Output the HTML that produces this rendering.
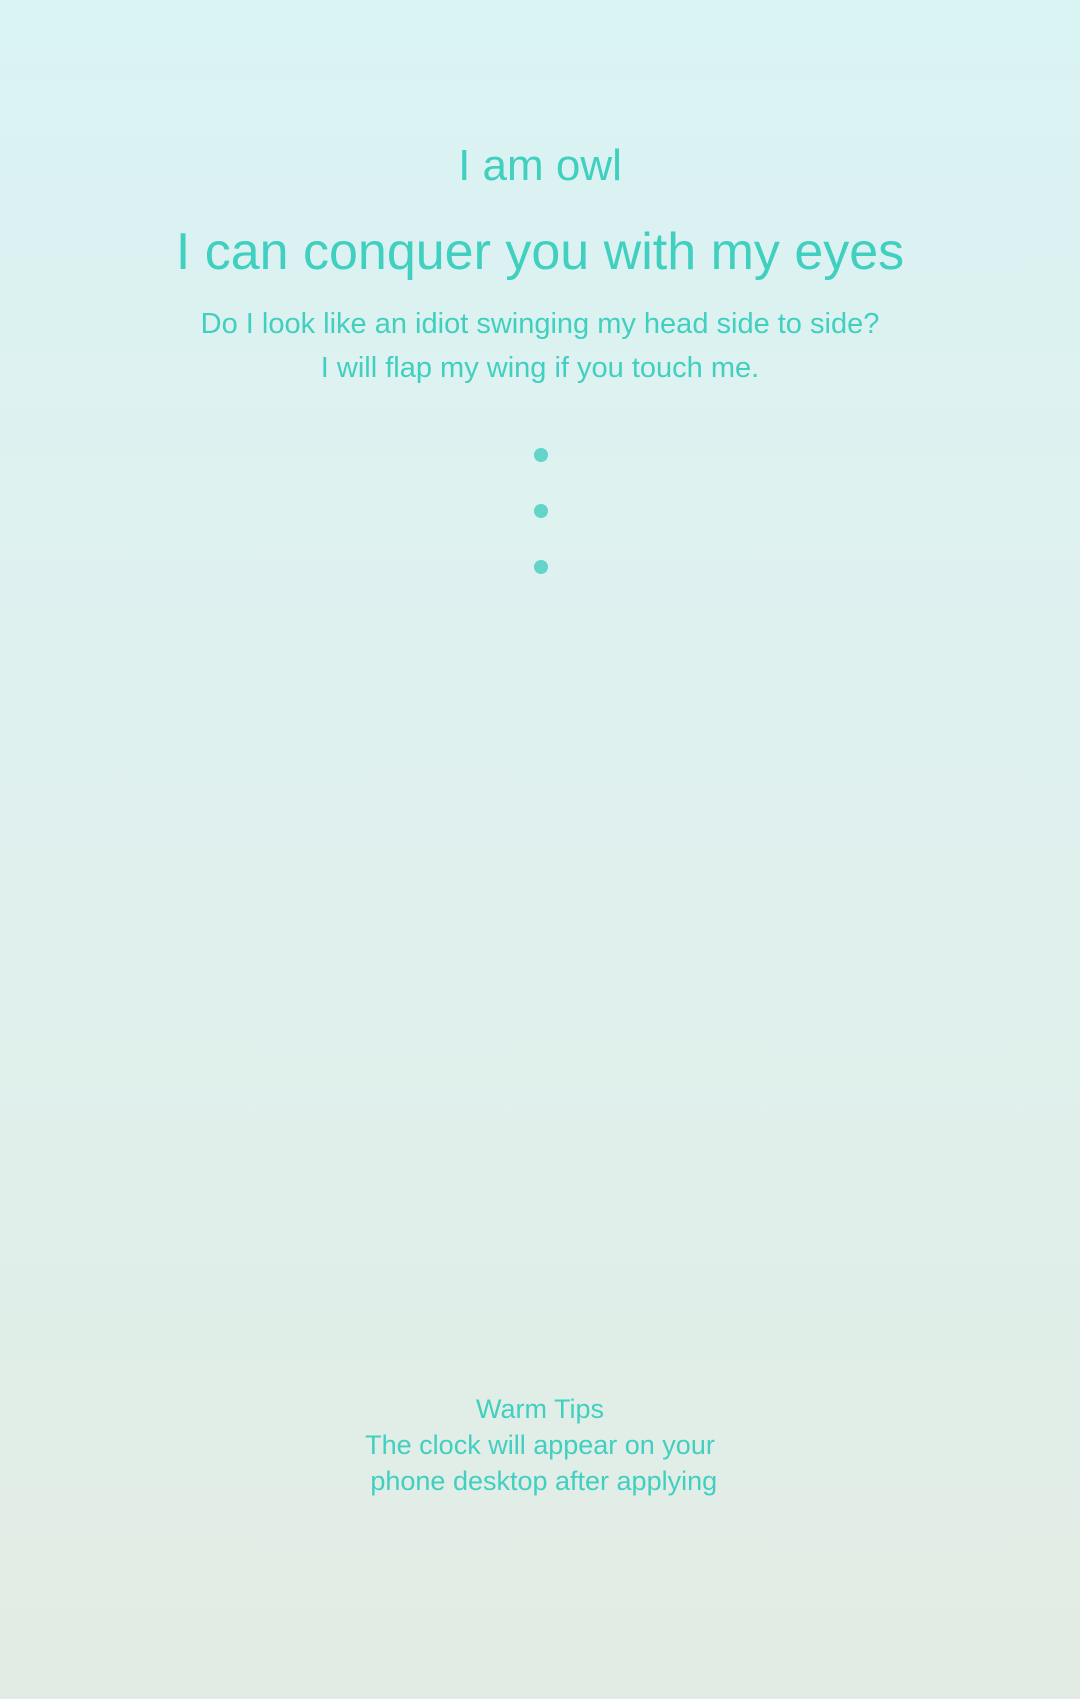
<!DOCTYPE html>
<html><head><meta charset="utf-8"><style>
html,body{margin:0;padding:0}
body{width:1080px;height:1699px;position:relative;overflow:hidden;
background:linear-gradient(180deg,#daf3f3 0%,#dff1ef 40%,#e0efea 70%,#e2ece4 100%);
font-family:"Liberation Sans",sans-serif;color:#41cfbf}
.t{position:absolute;left:0;width:1080px;text-align:center;white-space:nowrap}
.d{position:absolute;left:534px;width:14px;height:14px;border-radius:50%;background:#62d4c8}
</style></head><body>
<div class="t" style="top:140px;font-size:44px;line-height:52px">I am owl</div>
<div class="t" style="top:222px;font-size:52px;line-height:60px">I can conquer you with my eyes</div>
<div class="t" style="top:308px;font-size:29px;line-height:32px">Do I look like an idiot swinging my head side to side?</div>
<div class="t" style="top:352px;font-size:29px;line-height:32px">I will flap my wing if you touch me.</div>
<div class="d" style="top:448px"></div>
<div class="d" style="top:504px"></div>
<div class="d" style="top:560px"></div>
<div class="t" style="top:1394px;font-size:27px;line-height:30px">Warm Tips</div>
<div class="t" style="top:1430px;font-size:27px;line-height:30px">The clock will appear on your</div>
<div class="t" style="top:1466px;font-size:27px;line-height:30px">&nbsp;phone desktop after applying</div>
</body></html>
